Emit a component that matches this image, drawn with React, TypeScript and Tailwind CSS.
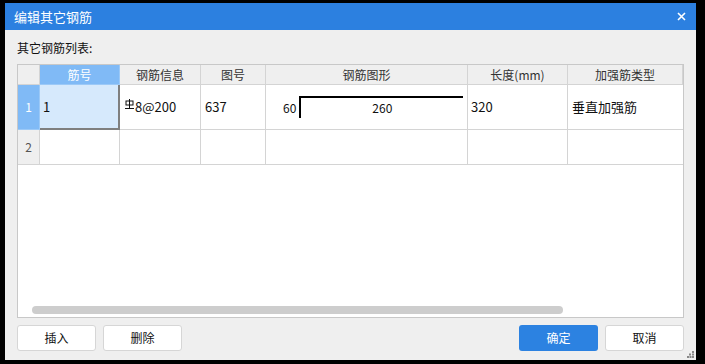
import React from 'react'

const font = { fontFamily: '"Microsoft YaHei", "Noto Sans CJK SC", "Liberation Sans", sans-serif' }

const RebarMark = () => (
  <svg width="9" height="11" viewBox="0 0 9 11" className="mr-[1px] -mt-[5px] inline-block">
    <rect x="1" y="2" width="7" height="4" fill="none" stroke="#111" strokeWidth="1" />
    <line x1="4.5" y1="0" x2="4.5" y2="9" stroke="#111" strokeWidth="1" />
    <line x1="0" y1="9.5" x2="9" y2="9.5" stroke="#111" strokeWidth="1" />
  </svg>
)

const headers = ['筋号', '钢筋信息', '图号', '钢筋图形', '长度(mm)', '加强筋类型']

export default function App() {
  return (
    <div className="w-[705px] h-[364px] bg-black overflow-hidden pt-[3px] pl-[5px]" style={font}>
      <div className="w-[691px] h-[357px] bg-[#efefef] flex flex-col">
        {/* Title bar */}
        <div className="h-[27px] bg-[#2c80e0] flex items-center justify-between pl-[9px] pr-[10px]">
          <span className="text-white text-[13px]">编辑其它钢筋</span>
          <svg width="9" height="9" viewBox="0 0 9 9">
            <path d="M1 1L8 8M8 1L1 8" stroke="white" strokeWidth="1.6" />
          </svg>
        </div>

        <div className="flex-1 flex flex-col px-[12px]">
          <div className="h-[34px] flex items-center pt-[2px] text-[12px] text-[#111]">其它钢筋列表:</div>

          {/* Table */}
          <div className="h-[254px] bg-white border border-[#c8c8c8] flex flex-col relative">
            <div className="grid grid-cols-[22px_80px_81px_65px_202px_100px_115px] text-[12px]">
              {/* header */}
              <div className="h-[20px] bg-[#efefef] border-r border-b border-[#d4d4d4]" />
              {headers.map((h, i) => (
                <div
                  key={h}
                  className={
                    i === 0
                      ? 'h-[20px] bg-[#80baf6] text-white border-r border-b border-[#9cc9f7] flex items-center justify-center'
                      : 'h-[20px] bg-[#efefef] text-[#333] border-r border-b border-[#d4d4d4] flex items-center justify-center'
                  }
                >
                  {h}
                </div>
              ))}

              {/* row 1 */}
              <div className="h-[45px] bg-[#80baf6] text-white border-r border-b border-[#9cc9f7] flex items-center justify-center">1</div>
              <div className="h-[45px] bg-[#d6e9fc] border-r-2 border-b-2 border-[#7f7f7f] flex items-center pl-[3px] text-[13px] text-[#111]">1</div>
              <div className="h-[45px] border-r border-b border-[#d4d4d4] flex items-center pl-[5px] text-[13px] text-[#111]">
                <RebarMark />8@200
              </div>
              <div className="h-[45px] border-r border-b border-[#d4d4d4] flex items-center pl-[4px] text-[13px] text-[#111]">637</div>
              <div className="h-[45px] border-r border-b border-[#d4d4d4] flex items-start pt-[11px] pl-[17px] text-[12px] text-[#111]">
                <span className="mt-[4px] mr-[3px] leading-[16px]">60</span>
                <div className="w-[164px] h-[22px] border-t-2 border-l-2 border-black flex justify-center pt-[2px]">
                  <span className="text-[12px] leading-[16px]">260</span>
                </div>
              </div>
              <div className="h-[45px] border-r border-b border-[#d4d4d4] flex items-center pl-[3px] text-[13px] text-[#111]">320</div>
              <div className="h-[45px] border-b border-[#d4d4d4] flex items-center pl-[4px] text-[13px] text-[#111]">垂直加强筋</div>

              {/* row 2 */}
              <div className="h-[35px] bg-[#efefef] text-[#555] border-r border-b border-[#d4d4d4] flex items-center justify-center">2</div>
              <div className="h-[35px] border-r border-b border-[#d4d4d4]" />
              <div className="h-[35px] border-r border-b border-[#d4d4d4]" />
              <div className="h-[35px] border-r border-b border-[#d4d4d4]" />
              <div className="h-[35px] border-r border-b border-[#d4d4d4]" />
              <div className="h-[35px] border-r border-b border-[#d4d4d4]" />
              <div className="h-[35px] border-b border-[#d4d4d4]" />
            </div>

            <div className="flex-1" />
            {/* horizontal scrollbar */}
            <div className="h-[8px] mb-[3px] ml-[14px] w-[531px] rounded-full bg-[#cdcdcd]" />
          </div>

          {/* Buttons */}
          <div className="flex items-center mt-[7px] text-[12px]">
            <button className="w-[79px] h-[26px] bg-white border border-[#d6d6d6] rounded-[3px] text-[#111]">插入</button>
            <button className="w-[79px] h-[26px] bg-white border border-[#d6d6d6] rounded-[3px] text-[#111] ml-[7px]">删除</button>
            <div className="flex-1" />
            <button className="w-[79px] h-[26px] bg-[#2c82e1] rounded-[3px] text-white">确定</button>
            <button className="w-[79px] h-[26px] bg-white border border-[#d6d6d6] rounded-[3px] text-[#111] ml-[7px]">取消</button>
          </div>

          <div className="flex-1 flex justify-end items-end pb-[2px] -mr-[10px]">
            <svg width="7" height="7" viewBox="0 0 7 7">
              <rect x="5" y="0" width="2" height="2" fill="#888" />
              <rect x="2" y="2.5" width="2" height="2" fill="#888" />
              <rect x="5" y="2.5" width="2" height="2" fill="#888" />
              <rect x="0" y="5" width="2" height="2" fill="#888" />
              <rect x="2.5" y="5" width="2" height="2" fill="#888" />
              <rect x="5" y="5" width="2" height="2" fill="#888" />
            </svg>
          </div>
        </div>
      </div>
    </div>
  )
}
